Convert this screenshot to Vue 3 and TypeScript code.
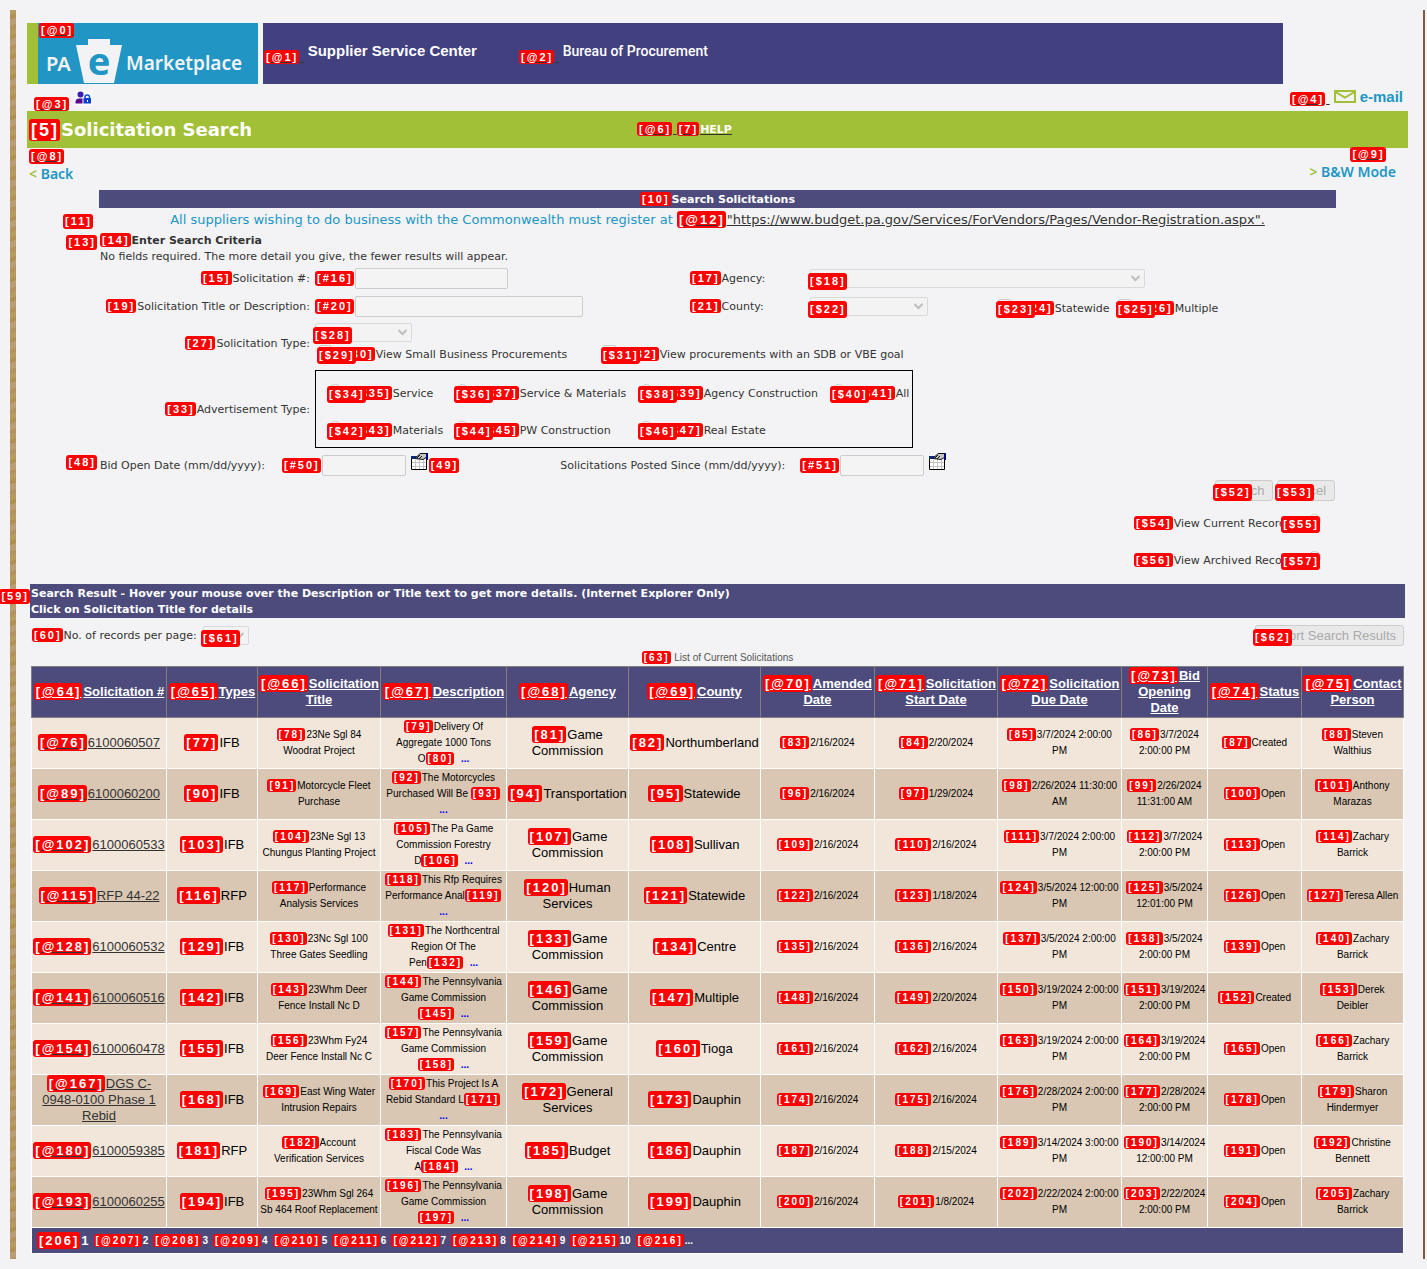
<script setup lang="ts">
import { h } from 'vue'

// Renders a string, turning every [n], [@n], [#n] or [$n] marker into a red tag,
// every newline into a line break and a trailing "..." into a "more" link.
const Tagged = (props: { text: string; more?: boolean }) =>
  props.text
    .split(/(\[[@#$]?\d+\]|\.\.\.|\n)/)
    .filter((part) => part !== '')
    .map((part) => {
      if (part === '\n') return h('br')
      if (part.startsWith('[')) return h('span', { class: 'tag' }, part)
      if (part === '...' && props.more) return h('a', { class: 'more', href: '#' }, part)
      return part
    })
Tagged.props = { text: String, more: Boolean }

interface Column {
  text: string
  width: number
}

const columns: Column[] = [
  { text: '[@64]Solicitation #', width: 135 },
  { text: '[@65]Types', width: 91 },
  { text: '[@66]Solicitation\nTitle', width: 123 },
  { text: '[@67]Description', width: 126 },
  { text: '[@68]Agency', width: 122 },
  { text: '[@69]County', width: 132 },
  { text: '[@70]Amended\nDate', width: 114 },
  { text: '[@71]Solicitation\nStart Date', width: 123 },
  { text: '[@72]Solicitation\nDue Date', width: 124 },
  { text: '[@73]Bid\nOpening\nDate', width: 86 },
  { text: '[@74]Status', width: 94 },
  { text: '[@75]Contact\nPerson', width: 102 },
]
const totalWidth = columns.reduce((sum, c) => sum + c.width, 0)

const rows: string[][] = [
  ['[@76]6100060507', '[77]IFB', '[78]23Ne Sgl 84\nWoodrat Project', '[79]Delivery Of\nAggregate 1000 Tons\nO[80]  ...', '[81]Game\nCommission', '[82]Northumberland', '[83]2/16/2024', '[84]2/20/2024', '[85]3/7/2024 2:00:00\nPM', '[86]3/7/2024\n2:00:00 PM', '[87]Created', '[88]Steven\nWalthius'],
  ['[@89]6100060200', '[90]IFB', '[91]Motorcycle Fleet\nPurchase', '[92]The Motorcycles\nPurchased Will Be [93]\n...', '[94]Transportation', '[95]Statewide', '[96]2/16/2024', '[97]1/29/2024', '[98]2/26/2024 11:30:00\nAM', '[99]2/26/2024\n11:31:00 AM', '[100]Open', '[101]Anthony\nMarazas'],
  ['[@102]6100060533', '[103]IFB', '[104]23Ne Sgl 13\nChungus Planting Project', '[105]The Pa Game\nCommission Forestry\nD[106]  ...', '[107]Game\nCommission', '[108]Sullivan', '[109]2/16/2024', '[110]2/16/2024', '[111]3/7/2024 2:00:00\nPM', '[112]3/7/2024\n2:00:00 PM', '[113]Open', '[114]Zachary\nBarrick'],
  ['[@115]RFP 44-22', '[116]RFP', '[117]Performance\nAnalysis Services', '[118]This Rfp Requires\nPerformance Anal[119]\n...', '[120]Human\nServices', '[121]Statewide', '[122]2/16/2024', '[123]1/18/2024', '[124]3/5/2024 12:00:00\nPM', '[125]3/5/2024\n12:01:00 PM', '[126]Open', '[127]Teresa Allen'],
  ['[@128]6100060532', '[129]IFB', '[130]23Nc Sgl 100\nThree Gates Seedling', '[131]The Northcentral\nRegion Of The\nPen[132]  ...', '[133]Game\nCommission', '[134]Centre', '[135]2/16/2024', '[136]2/16/2024', '[137]3/5/2024 2:00:00\nPM', '[138]3/5/2024\n2:00:00 PM', '[139]Open', '[140]Zachary\nBarrick'],
  ['[@141]6100060516', '[142]IFB', '[143]23Whm Deer\nFence Install Nc D', '[144]The Pennsylvania\nGame Commission\n[145]  ...', '[146]Game\nCommission', '[147]Multiple', '[148]2/16/2024', '[149]2/20/2024', '[150]3/19/2024 2:00:00\nPM', '[151]3/19/2024\n2:00:00 PM', '[152]Created', '[153]Derek\nDeibler'],
  ['[@154]6100060478', '[155]IFB', '[156]23Whm Fy24\nDeer Fence Install Nc C', '[157]The Pennsylvania\nGame Commission\n[158]  ...', '[159]Game\nCommission', '[160]Tioga', '[161]2/16/2024', '[162]2/16/2024', '[163]3/19/2024 2:00:00\nPM', '[164]3/19/2024\n2:00:00 PM', '[165]Open', '[166]Zachary\nBarrick'],
  ['[@167]DGS C-\n0948-0100 Phase 1\nRebid', '[168]IFB', '[169]East Wing Water\nIntrusion Repairs', '[170]This Project Is A\nRebid Standard L[171]\n...', '[172]General\nServices', '[173]Dauphin', '[174]2/16/2024', '[175]2/16/2024', '[176]2/28/2024 2:00:00\nPM', '[177]2/28/2024\n2:00:00 PM', '[178]Open', '[179]Sharon\nHindermyer'],
  ['[@180]6100059385', '[181]RFP', '[182]Account\nVerification Services', '[183]The Pennsylvania\nFiscal Code Was\nA[184]  ...', '[185]Budget', '[186]Dauphin', '[187]2/16/2024', '[188]2/15/2024', '[189]3/14/2024 3:00:00\nPM', '[190]3/14/2024\n12:00:00 PM', '[191]Open', '[192]Christine\nBennett'],
  ['[@193]6100060255', '[194]IFB', '[195]23Whm Sgl 264\nSb 464 Roof Replacement', '[196]The Pennsylvania\nGame Commission\n[197]  ...', '[198]Game\nCommission', '[199]Dauphin', '[200]2/16/2024', '[201]1/8/2024', '[202]2/22/2024 2:00:00\nPM', '[203]2/22/2024\n2:00:00 PM', '[204]Open', '[205]Zachary\nBarrick'],
]

// Columns set in the larger table type.
const largeColumns = [0, 1, 4, 5]

const pages = [
  { tag: '[@207]', label: '2' },
  { tag: '[@208]', label: '3' },
  { tag: '[@209]', label: '4' },
  { tag: '[@210]', label: '5' },
  { tag: '[@211]', label: '6' },
  { tag: '[@212]', label: '7' },
  { tag: '[@213]', label: '8' },
  { tag: '[@214]', label: '9' },
  { tag: '[@215]', label: '10' },
  { tag: '[@216]', label: '...' },
]

const adTypes = [
  { id: 'service', radio: '[$34]', text: '[$35]Service' },
  { id: 'service-materials', radio: '[$36]', text: '[$37]Service & Materials' },
  { id: 'agency-construction', radio: '[$38]', text: '[$39]Agency Construction' },
  { id: 'all', radio: '[$40]', text: '[$41]All' },
  { id: 'materials', radio: '[$42]', text: '[$43]Materials' },
  { id: 'pw-construction', radio: '[$44]', text: '[$45]PW Construction' },
  { id: 'real-estate', radio: '[$46]', text: '[$47]Real Estate' },
]
</script>

<template>
  <div class="frame">
    <div class="edge-left"></div>
    <main class="content">
      <header class="masthead">
        <a class="logo" href="#" aria-label="PA eMarketplace">
          <span class="tag logo-tag">[@0]</span>
          <span class="logo-pa">PA</span>
          <span class="keystone">
            <svg width="48" height="46" viewBox="0 0 48 46" aria-hidden="true">
              <path d="M13 1H35V7H47L39 45H9L1 7H13Z" fill="#f3f3f5" />
            </svg>
            <b>e</b>
          </span>
          <span class="logo-name">Marketplace</span>
        </a>
        <nav class="banner">
          <a class="banner-link first" href="#"><span class="mark"><Tagged text="[@1] " /></span><span class="banner-text">Supplier Service Center</span></a>
          <a class="banner-link" href="#"><span class="mark"><Tagged text="[@2] " /></span><span class="banner-text narrow">Bureau of Procurement</span></a>
        </nav>
      </header>

      <div class="utility">
        <a class="login" href="#" aria-label="Log in">
          <span class="tag">[@3]</span>
          <svg width="18" height="16" viewBox="0 0 18 16" aria-hidden="true">
            <rect width="18" height="16" fill="#f8f8fa" />
            <circle cx="5.500" cy="4.500" r="3" fill="#3a1fb0" />
            <path d="M0.500 13.500V11.500Q1 8.500 4 8.500H7.500V13.500Z" fill="#5a0a8c" />
            <path d="M10 9V7Q10 5 12.200 5T14.500 7V9" fill="none" stroke="#0a4fd0" stroke-width="1.500" />
            <rect x="8.500" y="8" width="7.500" height="5.500" fill="#0a3fd0" />
            <rect x="12" y="10" width="1" height="2" fill="#fff" />
          </svg>
        </a>
        <a class="email" href="#">
          <span class="mark"><Tagged text="[@4] " /></span>
          <svg width="22" height="13" viewBox="0 0 22 13" aria-hidden="true">
            <rect x="1" y="1" width="20" height="11" fill="none" stroke="#a2bf38" stroke-width="2" />
            <path d="M1.500 2L11 7.500L20.500 2" fill="none" stroke="#a2bf38" stroke-width="2" />
          </svg>
          <b>e-mail</b>
        </a>
      </div>

      <div class="title-bar">
        <h1><Tagged text="[5]Solicitation Search" /></h1>
        <a class="help" href="#"><Tagged text="[@6] [7]" /><b>HELP</b></a>
      </div>

      <div class="mode-row">
        <a class="mode" href="#"><span class="tag">[@8]</span><span class="mode-text"><i>&lt;</i> Back</span></a>
        <a class="mode bw" href="#"><span class="tag">[@9]</span><span class="mode-text"><i>&gt;</i> B&amp;W Mode</span></a>
      </div>

      <form class="search" @submit.prevent>
        <h2 class="section-title"><Tagged text="[10]Search Solicitations" /></h2>

        <p class="notice">
          <span class="tag gutter">[11]</span>All suppliers wishing to do business with the Commonwealth must register at
          <a href="#"><Tagged text="[@12]" />"https://www.budget.pa.gov/Services/ForVendors/Pages/Vendor-Registration.aspx".</a>
        </p>

        <div class="intro">
          <span class="tag gutter">[13]</span>
          <p><b><Tagged text="[14]Enter Search Criteria" /></b></p>
          <p>No fields required. The more detail you give, the fewer results will appear.</p>
        </div>

        <div class="row">
          <label class="label" for="number"><Tagged text="[15]Solicitation #:" /></label>
          <div class="field">
            <span class="tag">[#16]</span><input id="number" class="text medium" type="text" disabled />
          </div>
          <label class="label2" for="agency"><Tagged text="[17]Agency:" /></label>
          <span class="control">
            <select id="agency" class="agency" disabled></select><span class="tag over">[$18]</span>
          </span>
        </div>

        <div class="row">
          <label class="label" for="title"><Tagged text="[19]Solicitation Title or Description:" /></label>
          <div class="field">
            <span class="tag">[#20]</span><input id="title" class="text long" type="text" disabled />
          </div>
          <label class="label2" for="county"><Tagged text="[21]County:" /></label>
          <div class="county-cell">
            <span class="control">
              <select id="county" class="county" disabled></select><span class="tag over">[$22]</span>
            </span>
          </div>
          <div class="option scope">
            <span class="control"><input id="statewide" type="checkbox" disabled /><span class="tag over">[$23]</span></span>
            <label for="statewide"><Tagged text="[$24]Statewide" /></label>
          </div>
          <div class="option scope">
            <span class="control"><input id="multiple" type="checkbox" disabled /><span class="tag over">[$25]</span></span>
            <label for="multiple"><Tagged text="[$26]Multiple" /></label>
          </div>
        </div>

        <div class="row type-row">
          <label class="label" for="type"><Tagged text="[27]Solicitation Type:" /></label>
          <div class="type-fields">
            <span class="control">
              <select id="type" class="type" disabled></select><span class="tag over">[$28]</span>
            </span>
            <div class="options">
              <div class="option small-business">
                <span class="control"><input id="small" type="checkbox" disabled /><span class="tag over">[$29]</span></span>
                <label for="small"><Tagged text="[$30]View Small Business Procurements" /></label>
              </div>
              <div class="option">
                <span class="control"><input id="sdb" type="checkbox" disabled /><span class="tag over">[$31]</span></span>
                <label for="sdb"><Tagged text="[$32]View procurements with an SDB or VBE goal" /></label>
              </div>
            </div>
          </div>
        </div>

        <div class="row ad-row">
          <span id="ad-label" class="label"><Tagged text="[33]Advertisement Type:" /></span>
          <div class="ad-box" role="radiogroup" aria-labelledby="ad-label">
            <div v-for="ad in adTypes" :key="ad.id" class="option">
              <span class="control">
                <input :id="ad.id" type="radio" name="ad-type" :checked="ad.id === 'all'" disabled />
                <span class="tag over">{{ ad.radio }}</span>
              </span>
              <label :for="ad.id"><Tagged :text="ad.text" /></label>
            </div>
          </div>
        </div>

        <div class="row dates">
          <span class="tag gutter">[48]</span>
          <label class="bid-label" for="bid">Bid Open Date (mm/dd/yyyy):</label>
          <span class="tag">[#50]</span><input id="bid" class="text date" type="text" disabled />
          <svg class="calendar" width="18" height="18" viewBox="0 0 18 18" aria-hidden="true">
            <path d="M0.500 4V16.500H15.500V7" fill="#fff" stroke="#000" />
            <rect x="0" y="3" width="12" height="3" fill="#0a2a7a" />
            <path d="M1 9.500H15M1 13.500H15M4.500 7V16M8.500 7V16M12.500 7V16" stroke="#c4c4c4" />
            <path d="M4 5.500L9 0.500H16V4L12 6.500Z" fill="#c4c4c4" stroke="#111" />
            <path d="M6 5L9 2M8 6L11 3" stroke="#111" />
            <rect x="15" y="0" width="2" height="7" fill="#00007c" />
          </svg>
          <span class="tag">[49]</span>
          <label class="posted-label" for="posted">Solicitations Posted Since (mm/dd/yyyy):</label>
          <span class="tag">[#51]</span><input id="posted" class="text date" type="text" disabled />
          <svg class="calendar" width="18" height="18" viewBox="0 0 18 18" aria-hidden="true">
            <path d="M0.500 4V16.500H15.500V7" fill="#fff" stroke="#000" />
            <rect x="0" y="3" width="12" height="3" fill="#0a2a7a" />
            <path d="M1 9.500H15M1 13.500H15M4.500 7V16M8.500 7V16M12.500 7V16" stroke="#c4c4c4" />
            <path d="M4 5.500L9 0.500H16V4L12 6.500Z" fill="#c4c4c4" stroke="#111" />
            <path d="M6 5L9 2M8 6L11 3" stroke="#111" />
            <rect x="15" y="0" width="2" height="7" fill="#00007c" />
          </svg>
        </div>

        <div class="actions">
          <span class="control"><button type="submit" disabled>Search</button><span class="tag over">[$52]</span></span>
          <span class="control"><button type="reset" disabled>Cancel</button><span class="tag over">[$53]</span></span>
        </div>
        <div class="record-option">
          <label for="current"><Tagged text="[$54]View Current Records" /></label>
          <span class="control"><input id="current" type="radio" name="records" checked disabled /><span class="tag over end">[$55]</span></span>
        </div>
        <div class="record-option">
          <label for="archived"><Tagged text="[$56]View Archived Records" /></label>
          <span class="control"><input id="archived" type="radio" name="records" disabled /><span class="tag over end">[$57]</span></span>
        </div>
      </form>

      <section class="results">
        <h2 class="results-title">
          <span class="tag gutter">[59]</span>Search Result - Hover your mouse over the Description or Title text to get more details. (Internet Explorer Only)<br />Click on Solicitation Title for details
        </h2>
        <div class="results-tools">
          <label for="per-page"><Tagged text="[60]No. of records per page:" /></label>
          <span class="control">
            <select id="per-page" class="per-page" disabled></select><span class="tag over">[$61]</span>
          </span>
          <span class="control export"><button type="button" disabled>Export Search Results</button><span class="tag over">[$62]</span></span>
        </div>

        <table>
          <caption><Tagged text="[63] List of Current Solicitations" /></caption>
          <colgroup>
            <col v-for="c in columns" :key="c.text" :style="{ width: (c.width / totalWidth) * 100 + '%' }" />
          </colgroup>
          <thead>
            <tr>
              <th v-for="c in columns" :key="c.text" scope="col"><a href="#"><Tagged :text="c.text" /></a></th>
            </tr>
          </thead>
          <tbody>
            <tr v-for="row in rows" :key="row[0]">
              <td v-for="(cell, i) in row" :key="i" :class="{ large: largeColumns.includes(i) }">
                <a v-if="i === 0" href="#"><Tagged :text="cell" /></a>
                <Tagged v-else :text="cell" more />
              </td>
            </tr>
          </tbody>
          <tfoot>
            <tr>
              <td :colspan="columns.length">
                <nav class="pager">
                  <span class="current-page"><Tagged text="[206]" />1</span>
                  <a v-for="p in pages" :key="p.tag" href="#"><Tagged :text="p.tag" />{{ p.label }}</a>
                </nav>
              </td>
            </tr>
          </tfoot>
        </table>
      </section>
    </main>
    <div class="edge-right"></div>
  </div>
</template>

<style>
body {
  margin: 0;
  background: #f3f3f5;
}
.tag {
  padding: 1px 1px 1px 2px;
  margin-right: 1px;
  border-radius: 3px;
  background: #f00;
  color: #fff;
  font-family: "Liberation Sans", Arial, sans-serif;
  font-weight: bold;
  letter-spacing: 2px;
  white-space: nowrap;
}
.more {
  color: #00f;
  font-weight: bold;
  text-decoration: none;
}
</style>

<style scoped>
* {
  box-sizing: border-box;
}
.frame {
  display: flex;
  margin: 10px 2px 10px 10px;
  color: #333;
  font: 11px/16px "DejaVu Sans", Verdana, sans-serif;
}
a {
  color: #333;
}
h1,
h2,
p {
  margin: 0;
}
.edge-left {
  width: 6px;
  background: repeating-linear-gradient(160deg, #b79a5f 0 5px, #b09055 5px 9px, #bb9d74 9px 15px, #b39260 15px 19px);
}
.edge-right {
  width: 2px;
  background: #7b5c3e;
}
.content {
  flex: 1;
  min-width: 0;
  padding: 13px 15px 5px 11px;
}

.masthead {
  display: flex;
  gap: 5px;
  height: 61px;
  padding-right: 125px;
}
.logo {
  position: relative;
  display: flex;
  align-items: flex-end;
  width: 231px;
  padding-left: 8px;
  border-left: 11px solid #a2bf38;
  background: #2196c4;
  color: #f3f3f5;
  text-decoration: none;
  font-family: "Noto Sans", sans-serif;
}
.logo-tag {
  position: absolute;
  left: 1px;
  top: 0;
  line-height: 13px;
  text-decoration: underline #333;
}
.logo-pa {
  width: 29px;
  font-size: 20px;
  font-weight: 600;
  line-height: 41px;
}
.keystone {
  position: relative;
  width: 48px;
  height: 46px;
}
.keystone b {
  position: absolute;
  left: 0;
  right: 0;
  top: 4px;
  color: #2196c4;
  font-size: 38px;
  line-height: 36px;
  text-align: center;
}
.logo-name {
  margin-left: 3px;
  font-size: 19px;
  font-weight: 600;
  line-height: 42px;
}
.banner {
  flex: 1;
  display: flex;
  align-items: center;
  padding-left: 1px;
  background: #42407f;
}
.banner-link {
  display: flex;
  align-items: center;
  text-decoration: none;
}
.banner-link .mark {
  margin-top: 8px;
}
.banner-link.first {
  width: 255px;
}
.mark {
  white-space: pre;
  text-decoration: underline;
}
.banner-text {
  margin: 0 0 6px 4px;
  color: #fff;
  font: bold 15px/16px "Liberation Sans", Arial, sans-serif;
}
.banner-text.narrow {
  font: 500 14px/16px Roboto, sans-serif;
}

.utility {
  display: flex;
  justify-content: space-between;
  height: 27px;
  padding: 6px 5px 0 7px;
}
.login {
  display: flex;
  align-items: flex-start;
  gap: 5px;
}
.login .tag {
  margin-top: 7px;
  line-height: 12px;
  text-decoration: underline #333;
}
.email {
  display: flex;
  align-items: flex-start;
  gap: 4px;
  text-decoration: none;
}
.email .mark {
  line-height: 18px;
}
.email b {
  color: #2196c4;
  font: bold 15px/14px "Liberation Sans", Arial, sans-serif;
}

.title-bar {
  display: flex;
  align-items: center;
  height: 37px;
  padding-left: 2px;
  background: #a2bf38;
  color: #fff;
}
.title-bar h1 {
  width: 608px;
  font-size: 18px;
  line-height: 24px;
}
.help {
  white-space: pre;
}
.help b {
  color: #fff;
  text-decoration: underline #333;
}

.mode-row {
  display: flex;
  justify-content: space-between;
  height: 42px;
  padding: 1px 12px 0 2px;
}
.mode {
  display: flex;
  flex-direction: column;
  align-items: flex-start;
  text-decoration: none;
}
.mode .tag {
  line-height: 13px;
  text-decoration: underline #333;
}
.mode-text {
  color: #2196c4;
  font: 600 14px/20px "Noto Sans", sans-serif;
}
.mode-text i {
  color: #a2bf38;
  font-style: normal;
}
.bw {
  margin-top: -2px;
}
.bw .tag {
  margin-left: 41px;
}

.search {
  margin: 0 72px;
}
.section-title {
  height: 18px;
  background: #4c4b7b;
  color: #fff;
  font-size: 11px;
  line-height: 18px;
  text-align: center;
}
.gutter {
  position: absolute;
  right: 100%;
  line-height: 13px;
}
.notice {
  position: relative;
  height: 24px;
  color: #2196c4;
  font-size: 13px;
  line-height: 23px;
  text-align: center;
  white-space: nowrap;
}
.notice .gutter {
  top: 6px;
  margin-right: 6px;
  font-size: 11px;
}
.intro {
  position: relative;
  height: 32px;
  padding-left: 1px;
}
.intro .gutter {
  top: 3px;
  margin-right: 2px;
}
.row {
  position: relative;
  display: flex;
  align-items: center;
  height: 28px;
}
.label {
  width: 211px;
  text-align: right;
  white-space: nowrap;
}
.field {
  display: flex;
  align-items: center;
  width: 375px;
  margin-left: 5px;
}
.field .tag {
  line-height: 13px;
}
.label2 {
  width: 120px;
}
.text {
  height: 21px;
  padding: 0 2px;
  border: 1px solid #ccc;
  border-radius: 2px;
  background: #f4f4f4;
}
.medium {
  width: 153px;
}
.long {
  width: 228px;
}
.date {
  width: 84px;
}
.control {
  position: relative;
  display: inline-flex;
}
.over {
  position: absolute;
  z-index: 1;
  left: -2px;
  top: 4px;
  margin: 0;
  padding: 2px 1px 2px 2px;
  line-height: 13px;
}
.over.end {
  left: auto;
  right: 1px;
}
.option .over,
.record-option .over {
  top: 2px;
}
select {
  height: 19px;
  border: 1px solid #d0d0d0;
  border-radius: 2px;
  appearance: none;
  background: #f4f4f4 url("data:image/svg+xml,%3Csvg xmlns='http://www.w3.org/2000/svg' width='9' height='7'%3E%3Cpath d='M0.500 1L4.500 5L8.500 1' fill='none' stroke='%23aaa' stroke-width='2'/%3E%3C/svg%3E") no-repeat right 4px center;
}
.agency {
  width: 335px;
}
.county {
  width: 118px;
}
.type {
  width: 97px;
}
.per-page {
  width: 46px;
}
.county-cell {
  width: 188px;
}
.option {
  display: flex;
  align-items: center;
  white-space: nowrap;
}
.option .control {
  margin: 0 4px 6px 0;
}
.option.scope {
  width: 120px;
  padding-top: 4px;
}
input[type="checkbox"],
input[type="radio"] {
  width: 13px;
  height: 13px;
  margin: 0;
  border: 1px solid #ccc;
  border-radius: 2px;
  appearance: none;
  background: #f4f4f4;
}
input[type="radio"] {
  border-radius: 50%;
}
input[type="radio"]:checked {
  background: radial-gradient(circle, #ccc 3px, #f4f4f4 4px);
}
.type-row {
  height: 47px;
}
.type-fields {
  margin-left: 5px;
}
.type-fields > .control {
  display: flex;
  width: 97px;
}
.options {
  display: flex;
  margin-top: 3px;
  padding-left: 4px;
}
.small-business {
  width: 284px;
}
.ad-row {
  height: 84px;
}
.ad-box {
  display: grid;
  grid-template-columns: 127px 184px 192px auto;
  grid-template-rows: 37px 37px;
  align-content: start;
  justify-content: start;
  width: 598px;
  height: 78px;
  margin-left: 5px;
  padding: 4px 0 0 13px;
  border: 1px solid #000;
}
.ad-box .control {
  margin-right: 11px;
}
.dates {
  height: 29px;
  padding-left: 1px;
}
.dates .gutter {
  top: 4px;
  margin-right: 2px;
}
.dates > .tag {
  line-height: 13px;
}
.bid-label {
  width: 182px;
}
.posted-label {
  width: 240px;
  margin-left: 100px;
}
.calendar {
  margin: 0 0 8px 5px;
}
.actions {
  display: flex;
  justify-content: flex-end;
  gap: 4px;
  padding-right: 1px;
}
button {
  min-width: 58px;
  height: 21px;
  padding: 0 7px;
  border: 1px solid #ccc;
  border-radius: 3px;
  background: #e9e9e9;
  color: #aaa;
  font: 13px/15px "Liberation Sans", Arial, sans-serif;
}
.record-option {
  display: flex;
  align-items: center;
  justify-content: flex-end;
  height: 37px;
  padding: 8px 15px 0 0;
}
.record-option label {
  width: 174px;
  white-space: nowrap;
}
.record-option .control {
  margin-bottom: 6px;
}

.results {
  margin: 9px 3px 0;
}
.results-title {
  position: relative;
  padding: 2px 1px 0;
  background: #4c4b7b;
  color: #fff;
  font-size: 11px;
  line-height: 16px;
}
.results-title .gutter {
  top: 5px;
  margin: 0;
}
.results-tools {
  display: flex;
  align-items: center;
  height: 32px;
  padding: 3px 1px 0 2px;
}
.results-tools label {
  width: 171px;
  white-space: nowrap;
}
.export {
  margin-left: auto;
}
.export button {
  width: 149px;
  text-align: right;
}

table {
  width: calc(100% - 2px);
  margin-left: 1px;
  table-layout: fixed;
  border-collapse: collapse;
  color: #000;
  font: 10px/16px "Liberation Sans", Arial, sans-serif;
  text-align: center;
}
caption {
  height: 16px;
  color: #555;
}
th {
  height: 51px;
  padding: 1px 0;
  border: 1px solid #808080;
  background: #4c4b7b;
  font-size: 13px;
  white-space: pre;
}
th a {
  color: #fff;
}
td {
  height: 51px;
  padding: 1px 0;
  border: 1px solid #fff;
  white-space: pre;
}
.large {
  font-size: 13px;
}
tbody tr {
  background: #f2e6da;
}
tbody tr:nth-child(even) {
  background: #d9c7b3;
}
tfoot td {
  height: 26px;
  background: #4c4b7b;
}
.pager {
  display: flex;
  align-items: center;
  gap: 5px;
  padding-left: 5px;
  color: #fff;
  font-weight: bold;
}
.pager a {
  color: #fff;
  text-decoration: none;
}
.current-page {
  font-size: 13px;
}
</style>
